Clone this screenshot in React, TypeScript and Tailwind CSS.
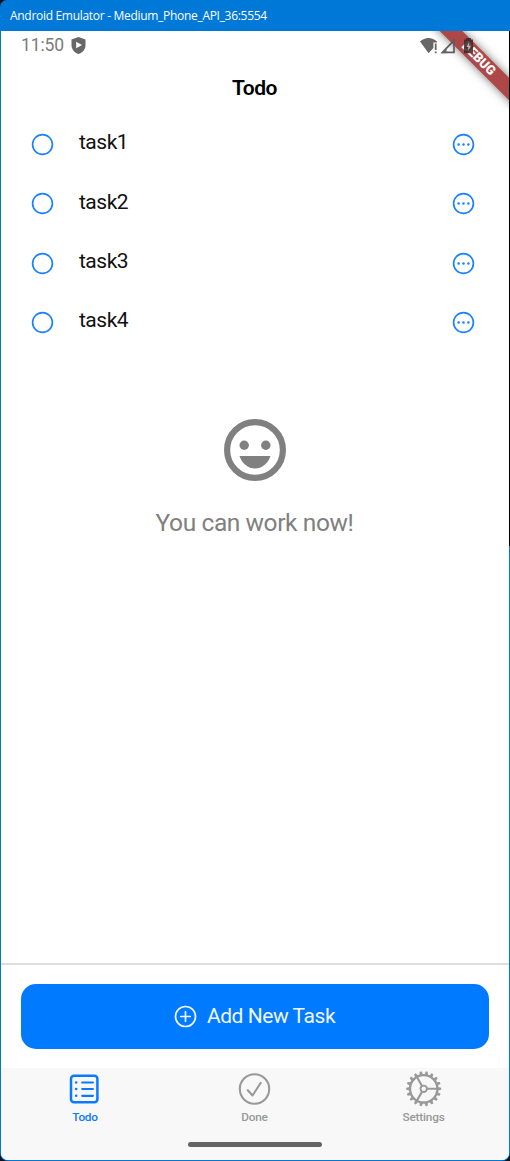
const tasks = ['task1', 'task2', 'task3', 'task4'];

function ShieldIcon() {
  return (
    <svg className="ml-[7px] block h-[17px] w-[15px]" viewBox="0 0 15 17">
      <path d="M7.5 0 L14.5 2.6 V8 C14.5 12.5 11.5 15.7 7.5 17 C3.5 15.7 .5 12.5 .5 8 V2.6 Z" fill="#676767" />
      <path d="M5.2 4.8 L11 8 L5.2 11.2 Z" fill="#fff" />
    </svg>
  );
}

function StatusIcons() {
  return (
    <svg className="relative z-10 block h-[18px] w-[56px]" viewBox="0 0 56 18">
      <path d="M0 4.5 C5 -.3 12 -.3 17 4.5 V5.5 H13.4 V11 L8.6 16.2 Z" fill="#676767" />
      <path d="M14.8 6.5 H16.6 V13 H14.8 Z M14.8 14.5 H16.6 V16.3 H14.8 Z" fill="#676767" />
      <path d="M22.5 15.3 L34 3.3 V15.3 Z" fill="none" stroke="#5c5c5c" strokeWidth="1.7" />
      <path d="M21 16.2 L26.5 10.7 V16.2 Z" fill="#676767" />
      <path d="M46 1 H51 V2.5 H53 V16.2 H44 V2.5 H46 Z" fill="#3c2828" fillOpacity=".85" />
      <path d="M49.2 5 L46.4 10 H48.2 V14 L51 8.8 H49.2 Z" fill="#c8a9a9" />
    </svg>
  );
}

function TaskRow({ label }: { label: string }) {
  return (
    <li className="flex h-[59.25px] items-center pr-[34px] pl-[30px]">
      <svg className="block size-[23px]" viewBox="0 0 23 23" fill="none" stroke="#1a82ff" strokeWidth="1.7">
        <circle cx="11.5" cy="11.5" r="9.9" />
      </svg>
      <span className="-mt-[3px] ml-[25px] flex-1 text-[21px] tracking-[-0.5px] text-[#111]">{label}</span>
      <svg className="block size-[23px]" viewBox="0 0 23 23" fill="none" stroke="#1a82ff" strokeWidth="1.7">
        <circle cx="11.5" cy="11.5" r="9.9" />
        <path d="M6.6 11.5h.01M11.5 11.5h.01M16.4 11.5h.01" strokeWidth="2.6" strokeLinecap="round" />
      </svg>
    </li>
  );
}

function SmileIcon() {
  return (
    <svg className="block size-[62px]" viewBox="0 0 62 62" fill="#808080">
      <circle cx="31" cy="31" r="27.9" fill="none" stroke="#808080" strokeWidth="6.2" />
      <circle cx="20.2" cy="26.3" r="4.7" />
      <circle cx="41.8" cy="26.3" r="4.7" />
      <path d="M15.5 37 H46.5 C44 44.5 38 49.6 31 49.6 C24 49.6 18 44.5 15.5 37 Z" />
    </svg>
  );
}

function ListIcon() {
  return (
    <svg className="block size-[38px]" viewBox="0.8 0 38 38" fill="none" stroke="#0a7aff" strokeLinecap="round">
      <rect x="5.8" y="5.8" width="26.4" height="26.4" rx="3" strokeWidth="2.5" />
      <path d="M17 12.5h10.7M17 19h10.7M17 25.8h10.7" strokeWidth="2.2" />
      <path d="M11 12.5h.01M11 19h.01M11 25.8h.01" strokeWidth="2.6" />
    </svg>
  );
}

function DoneIcon() {
  return (
    <svg className="block size-[38px]" viewBox="0.5 0 38 38" fill="none" stroke="#999" strokeWidth="2.1" strokeLinecap="round" strokeLinejoin="round">
      <circle cx="19" cy="19" r="14.7" />
      <path d="M12.3 20.2 L17 25.5 L25.3 12.8" />
    </svg>
  );
}

function GearIcon() {
  const teeth = Array.from({ length: 18 }, (_, i) => i * 20);
  return (
    <svg className="block size-[38px]" viewBox="0.3 0.2 38 38" fill="none" stroke="#999">
      <circle cx="19" cy="19" r="13.7" strokeWidth="2.3" />
      <circle cx="19" cy="19" r="3.2" strokeWidth="1.9" />
      <path d="M22.3 19 H32.5 M17.4 16.2 L12.2 7.2 M17.4 21.8 L12.2 30.8" strokeWidth="2.1" />
      {teeth.map((a) => (
        <path key={a} d="M17.2 5 L18 1.5 H20 L20.8 5 Z" fill="#999" stroke="none" transform={`rotate(${a + 10} 19 19)`} />
      ))}
    </svg>
  );
}

export default function App() {
  return (
    <div className="h-[1161px] w-[510px] bg-[#10151c] font-['Roboto',sans-serif]">
      <div className="flex h-full flex-col overflow-hidden rounded-tl-[7px] rounded-b-[8px] bg-[#0078d7]">
        <header className="flex h-[31px] shrink-0 items-center pl-[10px] font-['Open_Sans',sans-serif] text-[12px] tracking-[-0.3px] whitespace-nowrap text-white">
          Android Emulator - Medium_Phone_API_36:5554
        </header>
        <div className="flex min-h-0 flex-1 pb-px pl-px">
          <main className="relative flex w-[508px] flex-col overflow-hidden rounded-b-[7px] bg-white">
            <div className="absolute top-[20.5px] left-[404px] h-[16px] w-[150px] rotate-45 bg-[#ae4848] text-center text-[13px] leading-[16px] font-black text-white shadow-[0_0_10px_rgba(0,0,0,0.55)]">
              <span className="-ml-1">DEBUG</span>
            </div>
            <div className="flex h-[29px] shrink-0 items-center justify-between pr-[33px] pl-[20px]">
              <div className="flex items-center text-[17.5px] tracking-[-0.1px] text-[#7b7b7b]">
                11:50
                <ShieldIcon />
              </div>
              <StatusIcons />
            </div>
            <h1 className="flex h-[55px] shrink-0 items-center justify-center pt-[2px] pr-px text-[21px] font-semibold tracking-[-0.5px] text-black">Todo</h1>
            <ul>
              {tasks.map((t) => (
                <TaskRow key={t} label={t} />
              ))}
            </ul>
            <div className="flex flex-1 flex-col items-center pt-[67.4px] pr-px">
              <SmileIcon />
              <p className="mt-[23.6px] text-[24.5px] leading-[36px] tracking-[-0.4px] text-[#808080]">You can work now!</p>
            </div>
            <div className="h-[105px] shrink-0 border-t-2 border-[#dedede] px-[19.5px] pt-[18.5px]">
              <button className="flex h-[65px] w-[468px] items-center justify-center rounded-[15px] bg-[#007aff] text-[21px] tracking-[-0.45px] text-[#f0f6ff]">
                <svg className="mr-[10px] block size-[23px]" viewBox="0 0 23 23" fill="none" stroke="#f0f6ff" strokeWidth="1.7" strokeLinecap="round">
                  <circle cx="11.5" cy="11.5" r="10" />
                  <path d="M6.7 11.5h9.6M11.5 6.7v9.6" />
                </svg>
                <span className="pt-[2px]">Add New Task</span>
              </button>
            </div>
            <nav className="flex h-[92px] shrink-0 flex-col items-center bg-[#f8f8f8] pt-[2px] pr-px">
              <div className="grid w-full grid-cols-3 text-[11.8px] leading-[16px] font-medium tracking-[-0.2px] text-[#999]">
                <div className="flex flex-col items-center gap-px pr-px text-[#0a7aff]">
                  <ListIcon />
                  Todo
                </div>
                <div className="flex flex-col items-center gap-px">
                  <DoneIcon />
                  Done
                </div>
                <div className="flex flex-col items-center gap-px">
                  <GearIcon />
                  Settings
                </div>
              </div>
              <div className="mt-[17px] h-[5px] w-[134px] rounded-full bg-[#646464]" />
            </nav>
          </main>
          <div className="h-[515px] w-px bg-black" />
        </div>
      </div>
    </div>
  );
}
